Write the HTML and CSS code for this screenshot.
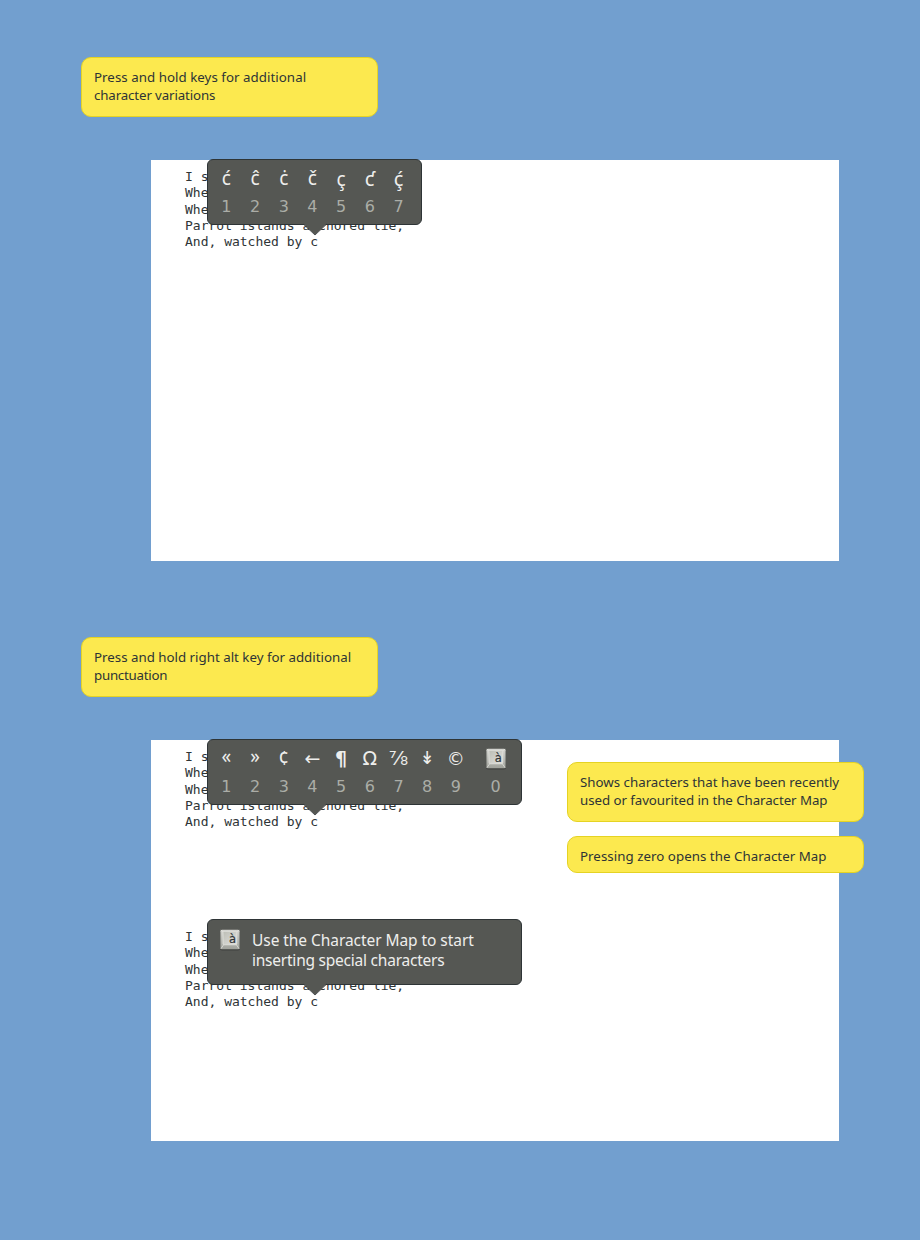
FILE: index.html
```html
<!DOCTYPE html>
<html lang="en">
<head>
<meta charset="utf-8">
<title>Character popovers</title>
<link rel="stylesheet" href="styles.css">
</head>
<body>
<svg class="defs" width="0" height="0" aria-hidden="true">
  <defs>
    <linearGradient id="key" x1="0" y1="0" x2="0" y2="1"><stop offset="0" stop-color="#d3d4cf"/><stop offset="1" stop-color="#a0a29b"/></linearGradient>
    <linearGradient id="cap" x1="0" y1="0" x2="1" y2="1"><stop offset="0" stop-color="#bcbeb6"/><stop offset="1" stop-color="#e0e0dc"/></linearGradient>
    <symbol id="charmap" viewBox="0 0 22 22">
      <rect x="1" y="2" width="20" height="19.5" rx="2" fill="#30322f" opacity=".55"/>
      <rect x="1.4" y=".8" width="19.2" height="19.4" rx="1.5" fill="url(#key)"/>
      <path d="M1.8 19.8 4.5 16M20.2 19.8 17.5 16M1.8 1.2 4 2.6M20.2 1.2 18 2.6" stroke="#e8e8e4" stroke-width=".7"/>
      <rect x="4" y="2.3" width="13.8" height="13.5" rx="1" fill="url(#cap)" stroke="#e8e8e4" stroke-width=".7"/>
    </symbol>
  </defs>
</svg>
<main class="board">
  <section class="scene">
    <div class="note"><span class="n1">Press and hold keys for additional</span><span class="n2">character variations</span></div>
    <div class="editor">
      <div class="sample">
        <pre class="poem">I s
Whe
Whe
Parrot islands anchored lie,
And, watched by c</pre>
        <div class="popover small">
          <div class="cell"><b>ć</b><i>1</i></div><div class="cell"><b>ĉ</b><i>2</i></div><div class="cell"><b>ċ</b><i>3</i></div><div class="cell"><b>č</b><i>4</i></div><div class="cell"><b class="low">ç</b><i>5</i></div><div class="cell"><b class="strong">ƈ</b><i>6</i></div><div class="cell"><b class="strong">ḉ</b><i>7</i></div>
          <svg class="tail" width="24" height="13" viewBox="0 0 24 13"><path class="fill" d="M.5 0H23.5V1L12 11.8.5 1Z"/><path class="edge" d="M.5 1.3 12 12 23.5 1.3"/></svg>
        </div>
      </div>
    </div>
  </section>
  <section class="scene">
    <div class="note"><span class="n3">Press and hold right alt key for additional</span><span class="n4">punctuation</span></div>
    <div class="editor">
      <div class="sample">
        <pre class="poem">I s
Whe
Whe
Parrot islands anchored lie,
And, watched by c</pre>
        <div class="popover">
          <div class="cell"><b class="quote">«</b><i>1</i></div><div class="cell"><b class="quote">»</b><i>2</i></div><div class="cell"><b>¢</b><i>3</i></div><div class="cell"><b class="sym arrow">←</b><i>4</i></div><div class="cell"><b class="sym bold">¶</b><i>5</i></div><div class="cell"><b class="sym omega">Ω</b><i>6</i></div><div class="cell"><b class="sym fraction">⅞</b><i>7</i></div><div class="cell"><b class="sym">↡</b><i>8</i></div><div class="cell"><b class="sym copy">©</b><i>9</i></div>
          <div class="cell last"><b><span class="key"><svg width="22" height="22"><use href="#charmap"/></svg><span>à</span></span></b><i>0</i></div>
          <svg class="tail" width="24" height="13" viewBox="0 0 24 13"><path class="fill" d="M.5 0H23.5V1L12 11.8.5 1Z"/><path class="edge" d="M.5 1.3 12 12 23.5 1.3"/></svg>
        </div>
      </div>
      <div class="sample">
        <pre class="poem">I s
Whe
Whe
Parrot islands anchored lie,
And, watched by c</pre>
        <div class="popover hint">
          <span class="key"><svg width="22" height="22"><use href="#charmap"/></svg><span>à</span></span>
          <div class="message"><span class="m1">Use the Character Map to start</span><span class="m2">inserting special characters</span></div>
          <svg class="tail" width="24" height="13" viewBox="0 0 24 13"><path class="fill" d="M.5 0H23.5V1L12 11.8.5 1Z"/><path class="edge" d="M.5 1.3 12 12 23.5 1.3"/></svg>
        </div>
      </div>
      <aside class="asides">
        <div class="note"><span class="n5">Shows characters that have been recently</span><span class="n6">used or favourited in the Character Map</span></div>
        <div class="note single"><span class="n7">Pressing zero opens the Character Map</span></div>
      </aside>
    </div>
  </section>
</main>
</body>
</html>
```
FILE: styles.css
```css
* { box-sizing: border-box; }
body { margin: 0; background: #729fcf; }
.defs { position: absolute; }
.board { width: 920px; height: 1240px; padding-top: 57px; overflow: hidden; }
.scene { height: 580px; }
.note {
  width: 297px; height: 60px; margin-left: 81px; padding: 11px 12px;
  border: 1.5px solid #e5d323; border-radius: 10px;
  background: #fce94f; color: #2e3436;
  font: 13.3px/17.5px "Noto Sans", sans-serif;
}
.note span, .message span { display: block; width: max-content; white-space: nowrap; }
.n1, .n7 { letter-spacing: .04px; }
.n2 { letter-spacing: -.13px; }
.n4 { letter-spacing: -.25px; }
.n6 { letter-spacing: -.06px; }
.note.single { height: 37px; }
.editor { position: relative; width: 688px; height: 401px; margin: 43px 0 0 151px; background: #fff; }
.sample { position: relative; height: 180px; padding: 9px 0 0 34px; }
.poem { margin: 0; color: #2e3436; font: 13px/16.25px "DejaVu Sans Mono", monospace; }
.popover {
  position: absolute; left: 56px; top: -1px; width: 315px; height: 66px;
  display: flex; padding: 0 4px;
  border: 1px solid #2e3436; border-radius: 6px; background: #555753;
}
.popover.small { width: 215px; }
.cell { width: 28.7px; flex: none; display: grid; grid-template-rows: 38px 20px; text-align: center; }
.cell b { display: flex; justify-content: center; color: #eeeeec; font: 19px/37px "Noto Sans", sans-serif; }
.cell b.low { line-height: 39px; }
.cell b.strong { font-size: 20px; }
.cell b.quote { line-height: 33px; }
.cell b.sym { font: 18px/36px "DejaVu Sans", sans-serif; }
.cell b.arrow { font-size: 19px; line-height: 37px; }
.cell b.bold { font-size: 19px; font-weight: 700; }
.cell b.omega { font-size: 19px; }
.cell b.fraction { font-size: 20px; line-height: 36px; }
.cell b.copy { font-size: 18px; line-height: 37px; }
.cell i { color: #babdb6; opacity: .85; font: 16px/17px "DejaVu Sans", sans-serif; }
.last { width: 51px; }
.key { position: relative; display: block; flex: none; width: 22px; height: 22px; }
.cell .key { margin-top: 8px; }
.key svg { display: block; }
.key span { position: absolute; left: 10px; top: 2px; color: #2e3436; font: 11.5px/16px "DejaVu Sans", sans-serif; -webkit-text-stroke: .2px #2e3436; }
.tail { position: absolute; left: 95px; top: 63px; }
.tail .fill { fill: #555753; }
.tail .edge { fill: none; stroke: #2e3436; stroke-width: .8; }
.hint { padding: 9px 11px; gap: 11px; }
.message { padding-top: 1px; color: #eeeeec; font: 15.5px/20px "Noto Sans", sans-serif; }
.m1 { letter-spacing: -.06px; }
.m2 { letter-spacing: -.23px; }
.asides { position: absolute; left: 416px; top: 22px; display: grid; gap: 14px; }
.asides .note { margin: 0; }
```
